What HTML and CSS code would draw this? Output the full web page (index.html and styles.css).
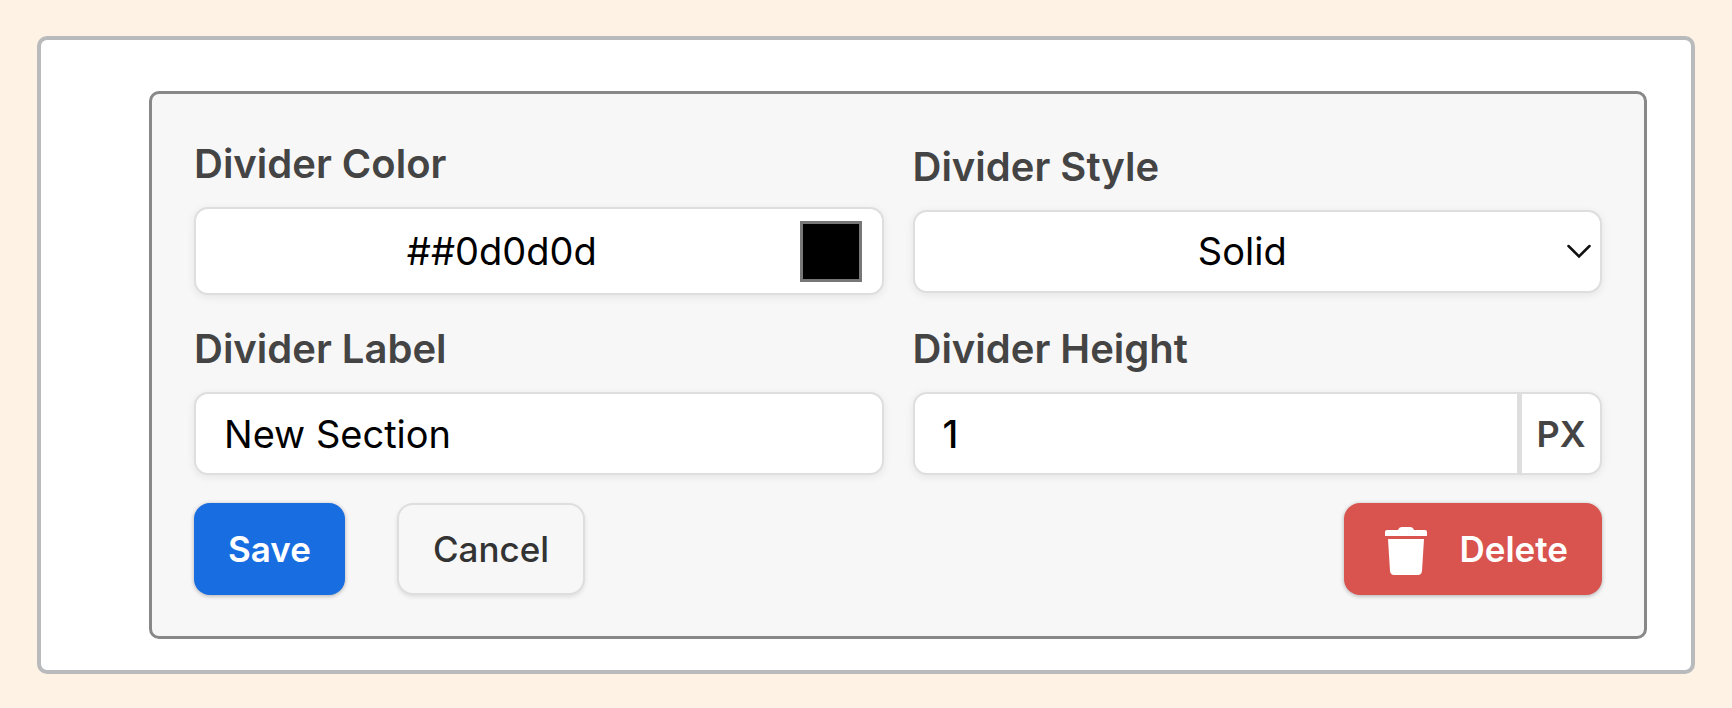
FILE: index.html
```html
<!DOCTYPE html>
<html lang="en">
<head>
<meta charset="utf-8">
<meta name="viewport" content="width=device-width, initial-scale=1">
<title>Divider settings</title>
<link rel="stylesheet" href="styles.css">
</head>
<body>
<main class="card">
  <form class="panel">
    <div class="fields">
      <div class="field">
        <label class="label" for="color-text">Divider Color</label>
        <div class="control control-color">
          <input class="input input-center" id="color-text" type="text" value="##0d0d0d">
          <input class="swatch" type="color" value="#000000" aria-label="Pick divider color">
        </div>
      </div>
      <div class="field">
        <label class="label" for="style">Divider Style</label>
        <div class="control control-select">
          <select class="select" id="style">
            <option>Solid</option>
            <option>Dashed</option>
            <option>Dotted</option>
          </select>
          <svg class="chevron" viewBox="0 0 24 16" aria-hidden="true"><path d="M1.500 2 12 12.500 22.500 2"/></svg>
        </div>
      </div>
      <div class="field">
        <label class="label" for="label">Divider Label</label>
        <div class="control">
          <input class="input" id="label" type="text" value="New Section">
        </div>
      </div>
      <div class="field">
        <label class="label" for="height">Divider Height</label>
        <div class="control">
          <input class="input input-number" id="height" type="text" inputmode="numeric" value="1">
          <span class="unit">PX</span>
        </div>
      </div>
    </div>
    <div class="actions">
      <button class="button button-save" type="submit">Save</button>
      <button class="button button-cancel" type="button">Cancel</button>
      <button class="button button-delete" type="button">
        <svg class="trash" viewBox="0 -4 42 52" aria-hidden="true"><path d="M2 3H13Q14 0 17 0H25Q28 0 29 3H40Q42 3 42 5V9H0V5Q0 3 2 3ZM3 12H39L37 44Q36.500 48 33 48H9Q5.500 48 5 44Z"/></svg>
        Delete
      </button>
    </div>
  </form>
</main>
</body>
</html>
```
FILE: styles.css
```css
* {
  box-sizing: border-box;
}

body {
  margin: 0;
  padding: 36px 37px 34px;
  background: #fef2e4;
  font-family: Inter, "Liberation Sans", sans-serif;
}

.card {
  padding: 51px 44px 31px 108px;
  border: 4px solid #b9babb;
  border-radius: 10px;
  background: #fff;
}

.panel {
  display: flex;
  flex-direction: column;
  gap: 28px;
  padding: 45px 42px 41px;
  border: 3px solid #888;
  border-radius: 10px;
  background: #f7f7f7;
}

.fields {
  display: grid;
  grid-template-columns: 1fr 1fr;
  align-items: center;
  gap: 29px;
}

.field {
  display: flex;
  flex-direction: column;
  gap: 18px;
  min-width: 0;
}

.label {
  color: #444;
  font-size: 40px;
  font-weight: 600;
  line-height: 50px;
}

.control {
  display: flex;
  align-items: stretch;
  height: 83px;
  border: 2px solid #dedede;
  border-radius: 14px;
  background: #fff;
  box-shadow: 0 2px 8px rgba(0, 0, 0, 0.08);
  overflow: hidden;
}

.control-color {
  align-items: center;
  height: 88px;
  padding-right: 20px;
}

.control-select {
  position: relative;
}

.input,
.select {
  flex: 1;
  min-width: 0;
  margin: 0;
  padding: 0 28px;
  border: 0;
  outline: 0;
  background: transparent;
  color: #000;
  font-family: inherit;
  font-size: 38px;
}

.input-center {
  padding: 0 4px 0 12px;
  text-align: center;
}

.input-number {
  font-weight: 500;
}

.select {
  appearance: none;
  padding: 0 30px 0 0;
  text-align: center;
  text-align-last: center;
}

.chevron {
  position: absolute;
  top: 32px;
  right: 9px;
  width: 24px;
  height: 16px;
  fill: none;
  stroke: #111;
  stroke-width: 2.5;
  stroke-linecap: round;
  pointer-events: none;
}

.swatch {
  appearance: none;
  width: 62px;
  height: 61px;
  padding: 0;
  border: 0;
  background: none;
}

.swatch::-webkit-color-swatch-wrapper {
  padding: 0;
}

.swatch::-webkit-color-swatch {
  border: 3px solid #777;
  border-radius: 0;
}

.unit {
  display: flex;
  align-items: center;
  justify-content: center;
  width: 83px;
  border-left: 5px solid #dedede;
  color: #444;
  font-size: 36px;
  font-weight: 600;
}

.actions {
  display: flex;
  align-items: center;
}

.button {
  display: flex;
  align-items: center;
  height: 92px;
  padding: 0 34px;
  border: 0;
  border-radius: 16px;
  font-family: inherit;
  font-size: 35px;
  font-weight: 600;
  box-shadow: 0 1px 4px rgba(0, 0, 0, 0.3);
}

.button-save {
  background: #186de1;
  color: #fff;
}

.button-cancel {
  margin-left: 52px;
  border: 2px solid #dedede;
  background: #f7f7f7;
  color: #333;
  font-weight: 500;
  box-shadow: 0 2px 4px rgba(0, 0, 0, 0.1);
}

.button-delete {
  gap: 32px;
  margin-left: auto;
  padding-left: 41px;
  background: #d9534f;
  color: #fff;
}

.trash {
  width: 42px;
  height: 52px;
  fill: #fff;
}
```
